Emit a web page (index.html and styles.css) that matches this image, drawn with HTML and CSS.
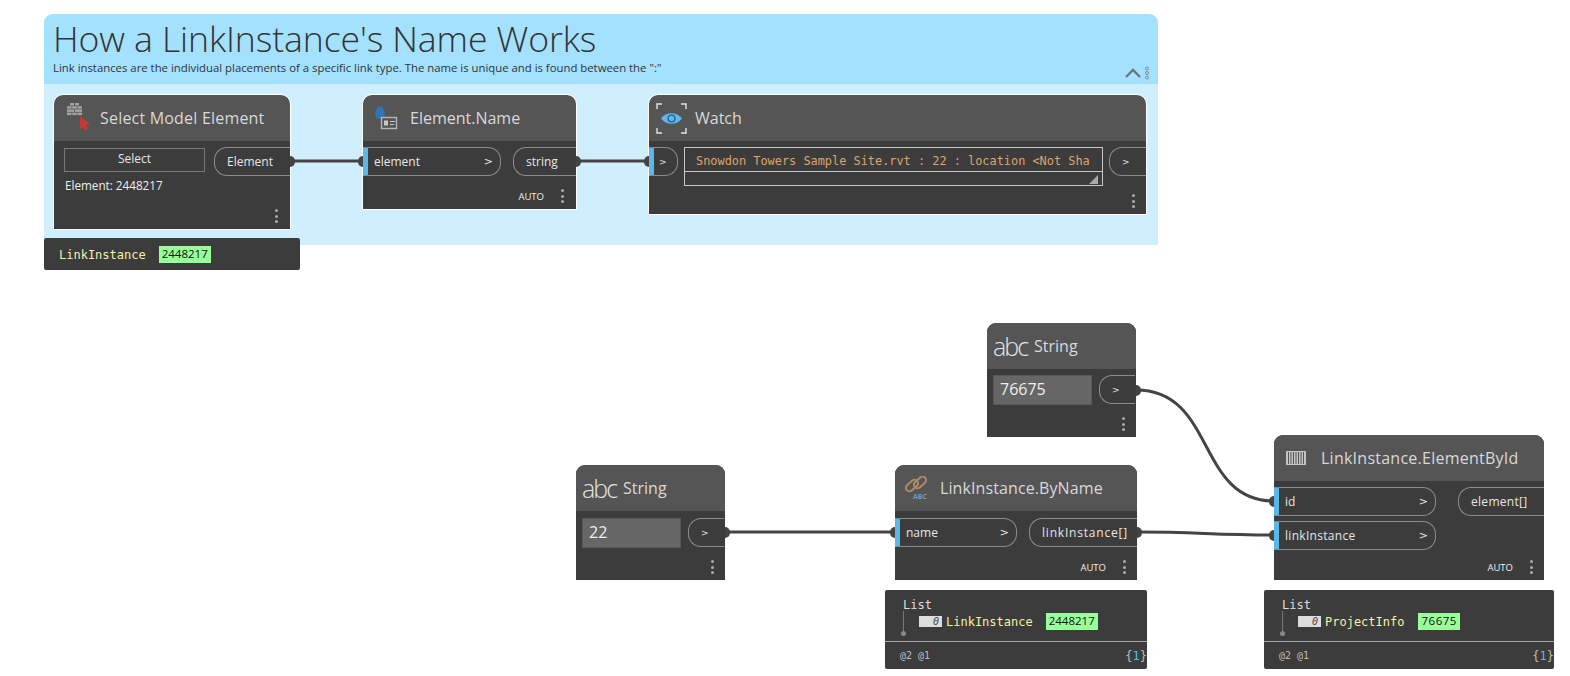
FILE: index.html
```html
<!DOCTYPE html>
<html>
<head>
    <title>How a LinkInstance's Name Works</title>
    <link rel="stylesheet" href="styles.css">
</head>
<body>
<div class="canvas">

    <div class="group">
        <div class="group-head">
            <h1>How a LinkInstance's Name Works</h1>
            <p>Link instances are the individual placements of a specific link type. The name is unique and is found between the ":"</p>
            <svg class="chevron" width="16" height="10" viewBox="0 0 16 10"><path d="M1 9 L8 2 L15 9" fill="none" stroke="#6b7680" stroke-width="2.4"/></svg>
            <svg class="grip" width="6" height="14" viewBox="0 0 6 14"><g fill="none" stroke="#7b8a94"><circle cx="3" cy="2.5" r="1.5"/><circle cx="3" cy="7" r="1.5"/><circle cx="3" cy="11.5" r="1.5"/></g></svg>
        </div>
    </div>

    <!-- wires -->
    <svg class="wires" width="1570" height="676" viewBox="0 0 1570 676">
        <g fill="none" stroke="#444" stroke-width="3">
            <path d="M290 161 H363"/>
            <path d="M576 161 H649"/>
            <path d="M725 532 H895"/>
            <path d="M1136 390 C1216 390 1196 501 1274 501"/>
            <path d="M1137 532 C1200 532 1210 535 1274 535"/>
        </g>
    </svg>

    <!-- Select Model Element -->
    <div class="node n-select">
        <div class="node-head">
            <svg class="icon" width="24" height="30" viewBox="0 0 24 30">
                <g fill="#a2a2a2">
                    <rect x="3" y="0" width="4" height="2.5"/><rect x="8" y="0" width="4" height="2.5"/>
                    <rect x="0" y="3.2" width="4.5" height="2.5"/><rect x="5.2" y="3.2" width="4.5" height="2.5"/><rect x="10.4" y="3.2" width="4.6" height="2.5"/>
                    <rect x="0" y="6.4" width="7" height="2.5"/><rect x="7.8" y="6.4" width="7.2" height="2.5"/>
                    <rect x="0" y="9.6" width="4.5" height="2.5"/><rect x="5.2" y="9.6" width="4.5" height="2.5"/><rect x="10.4" y="9.6" width="4.6" height="2.5"/>
                </g>
                <path d="M13 13 L23 21 L19 22 L21 26 L18 27 L16 24 L13 26 Z" fill="#c23b35"/>
            </svg>
            <span class="title t-select">Select Model Element</span>
        </div>
        <div class="node-body">
            <div class="row">
                <div class="select-col">
                    <div class="select-btn">Select</div>
                    <div class="select-val">Element: 2448217</div>
                </div>
                <div class="out w-element">Element</div>
            </div>
            <div class="foot"><span class="dots"><i></i><i></i><i></i></span></div>
        </div>
    </div>
    <div class="preview p-select">
        <span class="type">LinkInstance</span><span class="val">2448217</span>
    </div>

    <!-- Element.Name -->
    <div class="node n-name">
        <div class="node-head">
            <svg class="icon" width="24" height="24" viewBox="0 0 24 24">
                <path d="M5 0 C7 0 8 1 8 3 C10 5 11 10 8 12 C5 14 1 13 0 9 C0 6 1 4 2 3 C2 1 3 0 5 0 Z" fill="#2f74b5"/>
                <rect x="6.5" y="11.5" width="15" height="11" fill="#555" stroke="#b5b5b5" stroke-width="1.4"/>
                <rect x="9" y="14.5" width="4" height="5" fill="#c8c8c8"/>
                <path d="M15 15.5 H20 M15 18.5 H19" stroke="#c8c8c8"/>
            </svg>
            <span class="title t-name">Element.Name</span>
        </div>
        <div class="node-body">
            <div class="row">
                <div class="in w-element-in"><span>element</span><b>&gt;</b></div>
                <div class="out w-string">string</div>
            </div>
            <div class="foot"><span class="auto">AUTO</span><span class="dots"><i></i><i></i><i></i></span></div>
        </div>
    </div>

    <!-- Watch -->
    <div class="node n-watch">
        <div class="node-head">
            <svg class="icon" width="31" height="31" viewBox="0 0 31 31">
                <path d="M1 6 V1 H6 M25 1 H30 V6 M1 25 V30 H6 M25 30 H30 V25" fill="none" stroke="#e4e4e4" stroke-width="1.4"/>
                <path d="M5 15.5 C10 8.5 21 8.5 26 15.5 C21 22.5 10 22.5 5 15.5 Z" fill="#5cb8f0"/>
                <circle cx="15.5" cy="15.5" r="3.4" fill="none" stroke="#2f5f80" stroke-width="1.4"/>
            </svg>
            <span class="title t-watch">Watch</span>
        </div>
        <div class="node-body">
            <div class="row">
                <div class="in w-watch-in"><b>&gt;</b></div>
                <div class="watch-box">
                    <div class="watch-text">Snowdon Towers Sample Site.rvt : 22 : location &lt;Not Sha</div>
                    <div class="watch-foot"><svg width="9" height="9" viewBox="0 0 9 9"><path d="M9 0 V9 H0 Z" fill="#aaa"/></svg></div>
                </div>
                <div class="out w-watch-out"><b>&gt;</b></div>
            </div>
            <div class="foot"><span class="dots"><i></i><i></i><i></i></span></div>
        </div>
    </div>

    <!-- String 76675 -->
    <div class="node n-str1">
        <div class="node-head">
            <span class="abc">abc</span>
            <span class="title">String</span>
        </div>
        <div class="node-body">
            <div class="row">
                <div class="str-input">76675</div>
                <div class="out w-str-out"><b>&gt;</b></div>
            </div>
            <div class="foot"><span class="dots"><i></i><i></i><i></i></span></div>
        </div>
    </div>

    <!-- String 22 -->
    <div class="node n-str2">
        <div class="node-head">
            <span class="abc">abc</span>
            <span class="title">String</span>
        </div>
        <div class="node-body">
            <div class="row">
                <div class="str-input">22</div>
                <div class="out w-str-out"><b>&gt;</b></div>
            </div>
            <div class="foot"><span class="dots"><i></i><i></i><i></i></span></div>
        </div>
    </div>

    <!-- LinkInstance.ByName -->
    <div class="node n-byname">
        <div class="node-head">
            <svg class="icon" width="24" height="24" viewBox="0 0 24 24">
                <g fill="none" stroke="#b08a68" stroke-width="2">
                    <rect x="0" y="6" width="14" height="7" rx="3.5" transform="rotate(-42 7 9.5)"/>
                    <rect x="8" y="3" width="14" height="7" rx="3.5" transform="rotate(-42 15 6.5)"/>
                </g>
                <text x="8" y="23" class="icon-abc">ABC</text>
            </svg>
            <span class="title t-byname">LinkInstance.ByName</span>
        </div>
        <div class="node-body">
            <div class="row">
                <div class="in w-name"><span>name</span><b>&gt;</b></div>
                <div class="out w-list">linkInstance[]</div>
            </div>
            <div class="foot"><span class="auto">AUTO</span><span class="dots"><i></i><i></i><i></i></span></div>
        </div>
    </div>
    <div class="preview-list p-byname">
        <div class="list-body">
            <div class="list-label">List</div>
            <div class="list-row">
                <span class="index">0</span><span class="type">LinkInstance</span><span class="val">2448217</span>
            </div>
        </div>
        <div class="list-foot"><span>@2 @1</span><span class="count">{<em>1</em>}</span></div>
    </div>

    <!-- LinkInstance.ElementById -->
    <div class="node n-byid">
        <div class="node-head">
            <svg class="icon" width="20" height="14" viewBox="0 0 20 14">
                <rect width="20" height="14" fill="#c4c4c4"/>
                <path d="M2.5 1 V13 M5 1 V13 M7.5 1 V13 M10 1 V13 M12.5 1 V13 M15 1 V13 M17.5 1 V13" stroke="#555" stroke-width="1"/>
            </svg>
            <span class="title t-byid">LinkInstance.ElementById</span>
        </div>
        <div class="node-body">
            <div class="row">
                <div class="in-col">
                    <div class="in w-id"><span>id</span><b>&gt;</b></div>
                    <div class="in w-id"><span class="label-link">linkInstance</span><b>&gt;</b></div>
                </div>
                <div class="out w-elements">element[]</div>
            </div>
            <div class="foot"><span class="auto">AUTO</span><span class="dots"><i></i><i></i><i></i></span></div>
        </div>
    </div>
    <div class="preview-list p-byid">
        <div class="list-body">
            <div class="list-label">List</div>
            <div class="list-row">
                <span class="index">0</span><span class="type">ProjectInfo</span><span class="val">76675</span>
            </div>
        </div>
        <div class="list-foot"><span>@2 @1</span><span class="count">{<em>1</em>}</span></div>
    </div>

    <!-- port stubs -->
    <span class="stub-r s1"></span><span class="stub-l s2"></span>
    <span class="stub-r s3"></span><span class="stub-l s4"></span>
    <span class="stub-r s5"></span><span class="stub-l s6"></span>
    <span class="stub-r s7"></span><span class="stub-l s8"></span>
    <span class="stub-r s9"></span><span class="stub-l s10"></span>
</div>
</body>
</html>
```

FILE: styles.css
```css
html, body {
    margin: 0;
    padding: 0;
    background: #fff;
}
.canvas {
    position: relative;
    width: 1570px;
    height: 676px;
    overflow: hidden;
    font-family: "Open Sans", sans-serif;
}

/* group */
.group {
    position: absolute;
    left: 44px;
    top: 14px;
    width: 1114px;
    height: 231px;
    background: #cfefff;
    border-radius: 9px 9px 0 0;
}
.group-head {
    position: relative;
    height: 70px;
    padding-left: 9px;
    background: #a4e1ff;
    border-radius: 9px 9px 0 0;
    color: #333;
}
.group-head h1 {
    margin: 0;
    padding-top: 1px;
    font-size: 35.6px;
    font-weight: 300;
    line-height: 46px;
    letter-spacing: -0.1px;
}
.group-head p {
    margin: 0;
    font-size: 11.35px;
    line-height: 14px;
}
.chevron {
    position: absolute;
    left: 1081px;
    top: 54px;
}
.grip {
    position: absolute;
    left: 1100px;
    top: 52px;
}

/* wires */
.wires {
    position: absolute;
    left: 0;
    top: 0;
}
.stub-r, .stub-l {
    position: absolute;
    width: 5px;
    height: 11px;
    background: #444;
}
.stub-r { border-radius: 0 6px 6px 0; }
.stub-l { border-radius: 6px 0 0 6px; }
.s1 { left: 290px; top: 156px; }
.s2 { left: 358px; top: 156px; }
.s3 { left: 576px; top: 156px; }
.s4 { left: 644px; top: 156px; }
.s5 { left: 725px; top: 527px; }
.s6 { left: 890px; top: 527px; }
.s7 { left: 1136px; top: 385px; }
.s8 { left: 1269px; top: 496px; }
.s9 { left: 1137px; top: 527px; }
.s10 { left: 1269px; top: 530px; }

/* nodes */
.node {
    position: absolute;
    display: flex;
    flex-direction: column;
    box-sizing: border-box;
    border-radius: 9px 9px 0 0;
    background: #3c3c3c;
    overflow: hidden;
    color: #e6e6e6;
}
.n-select { left: 54px; top: 95px; width: 236px; height: 134px; outline: 1px solid #fff; }
.n-name { left: 363px; top: 95px; width: 213px; height: 114px; outline: 1px solid #fff; }
.n-watch { left: 649px; top: 95px; width: 497px; height: 119px; outline: 1px solid #fff; }
.n-str1 { left: 987px; top: 323px; width: 149px; height: 114px; }
.n-str2 { left: 576px; top: 465px; width: 149px; height: 115px; }
.n-byname { left: 895px; top: 465px; width: 242px; height: 115px; }
.n-byid { left: 1274px; top: 435px; width: 270px; height: 145px; }

.node-head {
    flex: none;
    display: flex;
    align-items: center;
    height: 46px;
    background: #555;
}
.title {
    font-size: 16px;
    color: #d8d8d8;
}
.icon { flex: none; }
.n-select .icon { margin: 0 0 0 13px; }
.t-select { margin-left: 9px; letter-spacing: 0.2px; }
.n-name .icon { margin-left: 12px; }
.t-name { margin-left: 11px; }
.n-watch .icon { margin-left: 7px; }
.t-watch { margin-left: 8px; }
.n-byname .icon { margin-left: 10px; }
.t-byname { margin-left: 11px; letter-spacing: 0.1px; }
.n-byid .icon { margin-left: 12px; }
.t-byid { margin-left: 15px; letter-spacing: 0.25px; }
.abc {
    margin-left: 6px;
    font-size: 25px;
    font-weight: 300;
    line-height: 30px;
    letter-spacing: -2px;
    color: #e4e4e4;
}
.abc + .title { margin-left: 7px; }
.icon-abc {
    font-size: 7px;
    font-weight: 700;
    fill: #6f9cc0;
}

.node-body {
    flex: 1;
    display: flex;
    flex-direction: column;
    justify-content: space-between;
    padding-top: 6px;
}
.n-str2 .node-body, .n-byname .node-body { padding-top: 7px; }
.row {
    display: flex;
    align-items: flex-start;
}
.foot {
    display: flex;
    align-items: center;
    justify-content: flex-end;
    height: 26px;
    padding-right: 11px;
}
.n-select .foot, .n-name .foot { padding-right: 12px; }
.auto {
    margin-right: 17px;
    font-size: 9.5px;
    color: #eee;
}
.dots {
    display: flex;
    flex-direction: column;
    gap: 2.5px;
}
.dots i {
    width: 3px;
    height: 3px;
    border-radius: 50%;
    background: #aaa;
}

/* ports */
.in, .out {
    box-sizing: border-box;
    display: flex;
    align-items: center;
    height: 29px;
    border: 1px solid #8c8c8c;
    font-size: 12px;
    color: #e6e6e6;
}
.in {
    justify-content: space-between;
    padding: 0 7px 0 6px;
    border-left: 5px solid #5bb7e5;
    border-radius: 0 13px 13px 0;
}
.out {
    padding-left: 12px;
    border-right: 0;
    border-radius: 13px 0 0 13px;
    white-space: nowrap;
}
.in b, .out b {
    font-weight: 400;
    font-size: 11px;
    font-family: "DejaVu Sans", sans-serif;
}
.w-element { width: 76px; margin-left: 9px; }
.w-element-in { width: 138px; }
.w-string { width: 63px; margin-left: 12px; }
.w-watch-in { width: 29px; padding: 0 0 0 5px; }
.w-watch-in b, .w-watch-out b, .w-str-out b { font-size: 9px; }
.w-watch-out { width: 37px; margin-left: 6px; }
.w-str-out { width: 36px; margin-left: 7px; }
.w-name { width: 122px; }
.w-list { width: 108px; margin-left: 12px; letter-spacing: 0.8px; }
.w-id { width: 162px; }
.label-link { letter-spacing: 0.3px; }
.w-elements { width: 86px; margin-left: 22px; letter-spacing: 0.3px; }
.in-col {
    display: flex;
    flex-direction: column;
    gap: 5px;
}

/* select */
.select-col {
    width: 141px;
    margin-left: 10px;
    margin-top: 1px;
}
.select-btn {
    box-sizing: border-box;
    height: 24px;
    border: 1px solid #777;
    text-align: center;
    font-size: 12px;
    line-height: 19px;
}
.select-val {
    margin: 5px 0 0 1px;
    font-size: 11.7px;
    line-height: 16px;
    color: #eee;
}

/* watch */
.watch-box {
    box-sizing: border-box;
    width: 419px;
    height: 39px;
    margin-left: 6px;
    border: 1px solid #c8c8c8;
}
.watch-text {
    height: 24px;
    padding-left: 11px;
    border-bottom: 1px solid #c8c8c8;
    box-sizing: border-box;
    font-family: "DejaVu Sans Mono", monospace;
    font-size: 11.9px;
    line-height: 26px;
    color: #dfa46a;
    white-space: nowrap;
    overflow: hidden;
}
.watch-foot {
    display: flex;
    justify-content: flex-end;
    padding: 3px 4px 0 0;
}

/* string */
.str-input {
    box-sizing: border-box;
    width: 99px;
    height: 30px;
    margin-left: 6px;
    padding-left: 6px;
    background: #666;
    border: 1px solid #585858;
    font-size: 16px;
    line-height: 27px;
    color: #eee;
}

/* previews */
.preview, .preview-list {
    position: absolute;
    background: #3c3c3c;
    font-family: "DejaVu Sans Mono", monospace;
    font-size: 12px;
    border-radius: 2px;
}
.preview {
    left: 44px;
    top: 238px;
    box-sizing: border-box;
    width: 256px;
    height: 32px;
    display: flex;
    align-items: center;
    padding: 1px 0 0 15px;
}
.type { color: #f2f2a8; }
.val {
    height: 17px;
    padding: 0 3px;
    background: #99ff99;
    color: #111;
    font-family: "Open Sans", sans-serif;
    font-size: 11.5px;
    line-height: 16px;
}
.preview .val { margin-left: 13px; }
.preview-list {
    box-sizing: border-box;
    top: 590px;
    height: 79px;
    color: #ddd;
}
.p-byname { left: 885px; width: 262px; }
.p-byid { left: 1264px; width: 290px; }
.p-byid .val { letter-spacing: 0.5px; }
.list-body {
    position: relative;
    height: 52px;
    padding: 8px 0 0 18px;
    box-sizing: border-box;
    border-bottom: 1px solid #a8a8a8;
}
.list-body::before {
    content: "";
    position: absolute;
    left: 18px;
    top: 21px;
    height: 20px;
    border-left: 1px solid #777;
}
.list-body::after {
    content: "";
    position: absolute;
    left: 16px;
    top: 41px;
    width: 5px;
    height: 5px;
    border-radius: 50%;
    background: #888;
}
.list-label { line-height: 14px; font-size: 12px; }
.list-row {
    display: flex;
    align-items: center;
    margin: 1px 0 0 16px;
}
.index {
    width: 23px;
    height: 11px;
    padding-right: 3px;
    box-sizing: border-box;
    background: #ddd;
    color: #444;
    font-size: 10px;
    font-style: italic;
    line-height: 11px;
    text-align: right;
    margin-right: 4px;
}
.list-row .val { margin-left: 13px; }
.p-byid .list-row .val { margin-left: 14px; }
.list-foot {
    display: flex;
    justify-content: space-between;
    padding: 7px 0 0 15px;
    font-size: 10px;
    line-height: 14px;
    color: #bbb;
}
.count { font-size: 12px; }
.count em { font-style: normal; color: #5bb7e5; }
```
